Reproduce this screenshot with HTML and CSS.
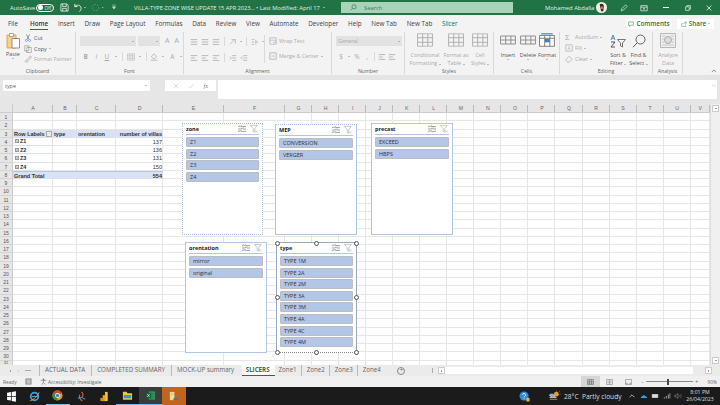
FILE: index.html
```html
<!DOCTYPE html>
<html>
	<head>
		<meta charset="UTF-8">
		<title>VILLA-TYPE-ZONE WISE UPDATE</title>
		<link rel="stylesheet" href="styles.css">
	</head>
	<body>
		<svg class="sprites" width="0" height="0">
			<symbol id="i-multi" viewBox="0 0 10 10"><path d="M0 2h2M4 2h6M0 5h4M6 5h4M0 8h2M4 8h6M2 .8l1 1 1.5-1.5M4 3.8l1 1 1.5-1.5M2 6.8l1 1 1.5-1.5" fill="none" stroke="#666" stroke-width=".8"/></symbol>
			<symbol id="i-filter" viewBox="0 0 10 10"><path d="M.5 .5h8.5L6 4.5v4.5L4 8V4.5z" fill="#fff" stroke="#aaa" stroke-width=".8"/><path d="M6.5 6.5l3 3M9.5 6.5l-3 3" stroke="#bbb" stroke-width=".7"/></symbol>
			<symbol id="i-lines" viewBox="0 0 10 10"><path d="M1 2h8M1 5h8M1 8h8" stroke="#aaa" stroke-width="1"/></symbol>
			<symbol id="i-lines2" viewBox="0 0 10 10"><path d="M1 2h8M1 5h5M1 8h8" stroke="#aaa" stroke-width="1"/></symbol>
			<symbol id="i-table" viewBox="0 0 14 12"><path d="M.5 .5h13v11H.5zM.5 4h13M.5 8h13M5 .5v11M9.5 .5v11" fill="#f3f3f3" stroke="#aaa" stroke-width=".8"/></symbol>
			<symbol id="i-cells" viewBox="0 0 14 12"><path d="M.5 2.5h13v7H.5zM.5 6h13M5 2.5v7M9.5 2.5v7" fill="#f3f3f3" stroke="#888" stroke-width=".8"/></symbol>
		</svg>

		<div class="app">
			<!-- title bar -->
			<div class="titlebar">
				<span class="autosave">AutoSave</span>
				<span class="toggle"><i></i>Off</span>
				<svg class="qa qa-save" viewBox="0 0 10 10"><path d="M1 1h6.5L9 2.5V9H1z M3 1v3h4V1M3 9V6h4v3" fill="none" stroke="#fff" stroke-width=".8"/></svg>
				<svg class="qa qa-undo" viewBox="0 0 10 10"><path d="M2 1v3h3M2 4c2-2.5 7-2 7 2 0 1.5-1 3-2 3.5" fill="none" stroke="#fff" stroke-width=".9"/></svg>
				<span class="caret-w"></span>
				<svg class="qa qa-redo" viewBox="0 0 10 10"><circle cx="5" cy="5" r="3.5" fill="none" stroke="#6fa98a" stroke-width=".9" stroke-dasharray="1.5 1.5"/></svg>
				<span class="caret-w dim"></span>
				<svg class="qa qa-more" viewBox="0 0 10 10"><path d="M2.5 2h5M3 4h4l-2 3z" fill="#cfe3d7" stroke="#cfe3d7" stroke-width=".6"/></svg>
				<span class="doc-name">VILLA-TYPE-ZONE WISE UPDATE 15 APR 2023...</span>
				<span class="doc-mod">• Last Modified: April 17</span>
				<span class="caret-w"></span>
				<div class="search">
					<svg viewBox="0 0 10 10"><circle cx="5.8" cy="4" r="3" fill="none" stroke="#2f6e4b" stroke-width=".9"/><path d="M3.6 6.2L1 9" stroke="#2f6e4b" stroke-width=".9"/></svg>
					<span>Search</span>
				</div>
				<span class="user">Mohamed Abdalla</span>
				<svg class="avatar" viewBox="0 0 12 12"><circle cx="6" cy="6" r="6" fill="#f2efe9"/><path d="M4 2.5c2-1.5 5-.5 4.5 2.5L8 10H5.5L5 7z" fill="#3b2a1e"/><path d="M5.5 5h2v2.5h-2z" fill="#c98a3c"/></svg>
				<svg class="win-ic pen" viewBox="0 0 10 10"><path d="M1.5 8.5l1-3L7 1l2 2-4.5 4.5z" fill="none" stroke="#fff" stroke-width=".8"/></svg>
				<svg class="win-ic disp" viewBox="0 0 10 10"><path d="M1 2h8v6.5H1zM1 4h8M4 6h2M5 4.8v2.4" fill="none" stroke="#fff" stroke-width=".8"/></svg>
				<span class="win-btn min"></span>
				<svg class="win-ic rest" viewBox="0 0 10 10"><path d="M2 3.5h4.5V8H2zM3.5 3.5V2H8v4.5H6.5" fill="none" stroke="#fff" stroke-width=".8"/></svg>
				<svg class="win-ic close" viewBox="0 0 10 10"><path d="M2 2l6 6M8 2l-6 6" stroke="#fff" stroke-width=".9"/></svg>
			</div>

			<!-- ribbon tabs -->
			<div class="tabs">
				<span class="tab tab-file">File</span>
				<span class="tab active">Home</span>
				<span class="tab">Insert</span>
				<span class="tab">Draw</span>
				<span class="tab">Page Layout</span>
				<span class="tab">Formulas</span>
				<span class="tab">Data</span>
				<span class="tab">Review</span>
				<span class="tab">View</span>
				<span class="tab">Automate</span>
				<span class="tab">Developer</span>
				<span class="tab">Help</span>
				<span class="tab">New Tab</span>
				<span class="tab">New Tab</span>
				<span class="tab slicer-tab">Slicer</span>
				<span class="tab-fill"></span>
				<span class="pill pill-comments"><svg viewBox="0 0 10 10"><path d="M1 1.5h8v5.5H4L2.5 9V7H1z" fill="none" stroke="#217346" stroke-width=".8"/></svg>Comments</span>
				<span class="pill pill-share"><svg viewBox="0 0 10 10"><path d="M1 4.5h2.5M1 4.5V9h7V6M4.5 5C5 3 6.5 2.5 7.5 2.5V1L9.5 3.2 7.5 5V3.8" fill="none" stroke="#217346" stroke-width=".7"/></svg>Share<i class="caret"></i></span>
			</div>

			<!-- ribbon -->
			<div class="ribbon">
				<div class="group g-clip">
					<div class="group-body">
						<div class="big paste">
							<svg class="paste-ic" viewBox="0 0 14 17"><path d="M1 3h9v13H1z" fill="#f6d28a" stroke="#d99a2b" stroke-width=".8"/><path d="M3.5 1.5h4v3h-4z" fill="#fff" stroke="#888" stroke-width=".7"/><path d="M6 6.5h7.5V16H6z" fill="#fff" stroke="#777" stroke-width=".8"/></svg>
							<span>Paste</span><i class="caret"></i>
						</div>
						<div class="stack">
							<div class="row"><svg class="ic" viewBox="0 0 10 10"><path d="M3 .5l3 6M7 .5l-3 6" stroke="#666" stroke-width=".8"/><circle cx="3" cy="8" r="1.3" fill="none" stroke="#4a7fc1" stroke-width=".7"/><circle cx="7" cy="8" r="1.3" fill="none" stroke="#4a7fc1" stroke-width=".7"/></svg><span>Cut</span></div>
							<div class="row"><svg class="ic" viewBox="0 0 10 10"><path d="M1 1h5v6.5H1zM3.5 3h5.5v6.5H3.5z" fill="#fff" stroke="#777" stroke-width=".7"/></svg><span>Copy</span><i class="caret"></i></div>
							<div class="row off"><svg class="ic" viewBox="0 0 10 10"><path d="M1 8l3-3 2 2-2 2H2zM5 4.5L8 1l1.5 1.5L6.5 6" fill="#ddd" stroke="#aaa" stroke-width=".7"/></svg><span>Format Painter</span></div>
						</div>
					</div>
					<div class="group-label">Clipboard</div>
				</div>

				<div class="group g-font">
					<div class="group-body stack-wide">
						<div class="row">
							<span class="combo font-name"><i class="caret"></i></span>
							<span class="combo font-size"><i class="caret"></i></span>
							<span class="glyph grow">A</span><span class="glyph grow">A</span>
						</div>
						<div class="row spread">
							<b class="glyph">B</b><em class="glyph">I</em><u class="glyph">U</u><i class="caret"></i><span class="sep"></span>
							<svg class="ic" viewBox="0 0 10 10"><use href="#i-table"/></svg><i class="caret"></i><span class="sep"></span>
							<svg class="ic" viewBox="0 0 10 10"><path d="M5 1l3.5 3.5L5 7.5 1.5 4.5zM1 9h8" fill="none" stroke="#aaa" stroke-width=".9"/></svg><i class="caret"></i>
							<span class="glyph under">A</span><i class="caret"></i>
						</div>
					</div>
					<div class="group-label">Font</div>
				</div>

				<div class="group g-align">
					<div class="group-body">
						<div class="stack-wide align-icons">
							<div class="row">
								<svg class="ic" viewBox="0 0 10 10"><use href="#i-lines"/></svg><svg class="ic" viewBox="0 0 10 10"><use href="#i-lines"/></svg><svg class="ic" viewBox="0 0 10 10"><use href="#i-lines"/></svg><span class="sep"></span>
								<svg class="ic" viewBox="0 0 10 10"><path d="M1 8L7 2M3 2h5v5" fill="none" stroke="#aaa" stroke-width=".9"/></svg><i class="caret"></i><span class="sep"></span>
								<svg class="ic" viewBox="0 0 10 10"><path d="M1 2h3M1 5h3M1 8h3M6 2v6M6 5h3" fill="none" stroke="#aaa" stroke-width=".9"/></svg><i class="caret"></i>
							</div>
							<div class="row">
								<svg class="ic" viewBox="0 0 10 10"><use href="#i-lines2"/></svg><svg class="ic" viewBox="0 0 10 10"><use href="#i-lines2"/></svg><svg class="ic" viewBox="0 0 10 10"><use href="#i-lines2"/></svg><span class="sep"></span>
								<svg class="ic" viewBox="0 0 10 10"><path d="M4 2h5M4 5h5M4 8h5M1 3l2 2-2 2" fill="none" stroke="#aaa" stroke-width=".9"/></svg>
								<svg class="ic" viewBox="0 0 10 10"><path d="M4 2h5M4 5h5M4 8h5M3 3L1 5l2 2" fill="none" stroke="#aaa" stroke-width=".9"/></svg>
							</div>
						</div>
						<span class="vsep"></span>
						<div class="stack-wide wrap-col">
							<div class="row off"><svg class="ic" viewBox="0 0 10 10"><path d="M1 1h8v8H1zM1 4h6a1.5 1.5 0 0 1 0 3H5" fill="none" stroke="#aaa" stroke-width=".8"/></svg><span>Wrap Text</span></div>
							<div class="row off"><svg class="ic" viewBox="0 0 10 10"><path d="M1 1h8v8H1zM3 5h4" fill="none" stroke="#aaa" stroke-width=".9"/></svg><span>Merge &amp; Center</span><i class="caret"></i></div>
						</div>
					</div>
					<div class="group-label">Alignment</div>
				</div>

				<div class="group g-num">
					<div class="group-body stack-wide">
						<div class="row"><span class="combo num-format"><span>General</span><i class="caret"></i></span></div>
						<div class="row spread num-row">
							<span class="glyph">$</span><i class="caret"></i><span class="glyph">%</span><span class="glyph">,</span><span class="sep"></span>
							<svg class="ic" viewBox="0 0 10 10"><use href="#i-lines2"/></svg><svg class="ic" viewBox="0 0 10 10"><use href="#i-lines2"/></svg>
						</div>
					</div>
					<div class="group-label">Number</div>
				</div>

				<div class="group g-styles">
					<div class="group-body tools">
						<div class="big off w40"><svg class="big-ic" viewBox="0 0 14 12"><use href="#i-table"/></svg><span>Conditional</span><span>Formatting <i class="caret"></i></span></div>
						<div class="big off w22"><svg class="big-ic" viewBox="0 0 14 12"><use href="#i-table"/></svg><span>Format as</span><span>Table <i class="caret"></i></span></div>
						<div class="big off w26"><svg class="big-ic" viewBox="0 0 14 12"><use href="#i-table"/></svg><span>Cell</span><span>Styles <i class="caret"></i></span></div>
					</div>
					<div class="group-label">Styles</div>
				</div>

				<div class="group g-cells">
					<div class="group-body tools">
						<div class="big w18"><svg class="big-ic" viewBox="0 0 14 12"><use href="#i-cells"/></svg><span>Insert</span><i class="caret"></i></div>
						<div class="big w22"><svg class="big-ic" viewBox="0 0 14 12"><use href="#i-cells"/></svg><span>Delete</span><i class="caret"></i></div>
						<div class="big w16"><svg class="big-ic" viewBox="0 0 14 12"><path d="M.5 2h13v9.5H.5zM.5 4.5h13M5 2v9.5M9.5 2v9.5" fill="#fff" stroke="#777" stroke-width=".8"/><path d="M5 5h4.5v3H5z" fill="#3f7fd0"/><path d="M2 .6h10" stroke="#3f7fd0" stroke-width="1"/></svg><span>Format</span><i class="caret"></i></div>
					</div>
					<div class="group-label">Cells</div>
				</div>

				<div class="group g-edit">
					<div class="group-body">
						<div class="stack edit-stack">
							<div class="row off"><span class="glyph sum">Σ</span><span>AutoSum</span><i class="caret"></i></div>
							<div class="row off"><svg class="ic" viewBox="0 0 10 10"><path d="M1 1h8v8H1zM5 2.5v4M3.5 5.2L5 6.8l1.5-1.6" fill="none" stroke="#aaa" stroke-width=".8"/></svg><span>Fill</span><i class="caret"></i></div>
							<div class="row off"><svg class="ic" viewBox="0 0 10 10"><path d="M1 6l4-4.5L9 5 5.5 9H3z" fill="none" stroke="#aaa" stroke-width=".8"/></svg><span>Clear</span><i class="caret"></i></div>
						</div>
						<div class="big sort">
							<svg class="big-ic" viewBox="0 0 16 14"><path d="M7.5 5.5h8L12.5 9v4l-2-1V9z" fill="#fff" stroke="#555" stroke-width=".8"/><path d="M1 6l2-5 2 5M1.8 4.2h2.4" fill="none" stroke="#3f7fd0" stroke-width=".9"/><path d="M1 8h4L1 13h4" fill="none" stroke="#444" stroke-width=".9"/></svg>
							<span>Sort &amp;</span><span>Filter <i class="caret"></i></span>
						</div>
						<div class="big find">
							<svg class="big-ic" viewBox="0 0 14 14"><circle cx="8.5" cy="5.5" r="4.5" fill="none" stroke="#555" stroke-width=".9"/><path d="M5.2 8.8L1 13.2" stroke="#555" stroke-width="1"/></svg>
							<span>Find &amp;</span><span>Select <i class="caret"></i></span>
						</div>
					</div>
					<div class="group-label">Editing</div>
				</div>

				<div class="group g-analysis">
					<div class="group-body tools">
						<div class="big off w30"><svg class="an-ic" viewBox="0 0 16 15"><path d="M.5 .5h15v14H.5z" fill="#eee" stroke="#aaa" stroke-width=".8"/><circle cx="8" cy="7" r="3.5" fill="#ddd" stroke="#999" stroke-width=".8"/><path d="M2 3h3M11 3h3M2 12h12M2 6h2M12 6h2M2 9h2M12 9h2" stroke="#bbb" stroke-width=".8"/></svg><span>Analyze</span><span>Data</span></div>
					</div>
					<div class="group-label">Analysis</div>
				</div>
				<div class="ribbon-end"><svg viewBox="0 0 8 5"><path d="M1 4l3-3 3 3" fill="none" stroke="#555" stroke-width=".8"/></svg></div>
			</div>
			<div class="ribbon-gap"></div>

			<!-- formula bar -->
			<div class="formula">
				<div class="name-box">type<i class="caret"></i></div>
				<span class="fx-dots"></span>
				<div class="fx-box">
					<svg viewBox="0 0 8 8"><path d="M1 1l6 6M7 1L1 7" stroke="#bbb" stroke-width=".7"/></svg>
					<svg viewBox="0 0 8 8"><path d="M1 4.5l2 2L7 1.5" fill="none" stroke="#bbb" stroke-width=".7"/></svg>
					<em>fx</em>
				</div>
				<div class="formula-input"><svg viewBox="0 0 8 5"><path d="M1 4l3-3 3 3" fill="none" stroke="#bbb" stroke-width=".8"/></svg></div>
			</div>

			<!-- sheet -->
			<div class="sheet-wrap">
				<div class="sheet">
					<div class="corner"><i></i></div>
					<div class="col-head">A</div><div class="col-head">B</div><div class="col-head">C</div><div class="col-head">D</div><div class="col-head">E</div><div class="col-head">F</div><div class="col-head">G</div><div class="col-head">H</div><div class="col-head">I</div><div class="col-head">J</div><div class="col-head">K</div><div class="col-head">L</div><div class="col-head">M</div><div class="col-head">N</div><div class="col-head">O</div><div class="col-head">P</div><div class="col-head">Q</div><div class="col-head">R</div><div class="col-head">S</div><div class="col-head">T</div><div class="col-head">U</div><div class="col-head">V</div>

					<div class="row-head">1</div>
					<div class="row-head">2</div>
					<div class="row-head">3</div>
					<div class="cell pv-head">Row Labels<i class="filter-btn"></i></div><div class="cell pv-head">type</div><div class="cell pv-head">orentation</div><div class="cell pv-head pv-right">number of villas</div>
					<div class="row-head">4</div>
					<div class="cell pv-key"><i class="plus"></i>Z1</div><div class="cell"></div><div class="cell"></div><div class="cell num">137</div>
					<div class="row-head">5</div>
					<div class="cell pv-key"><i class="plus"></i>Z2</div><div class="cell"></div><div class="cell"></div><div class="cell num">136</div>
					<div class="row-head">6</div>
					<div class="cell pv-key"><i class="plus"></i>Z3</div><div class="cell"></div><div class="cell"></div><div class="cell num">131</div>
					<div class="row-head">7</div>
					<div class="cell pv-key pv-last"><i class="plus"></i>Z4</div><div class="cell"></div><div class="cell"></div><div class="cell num">150</div>
					<div class="row-head">8</div>
					<div class="cell pv-total">Grand Total</div><div class="cell pv-total"></div><div class="cell pv-total"></div><div class="cell pv-total num">554</div>
					<div class="row-head">9</div><div class="row-head">10</div><div class="row-head">11</div><div class="row-head">12</div><div class="row-head">13</div><div class="row-head">14</div><div class="row-head">15</div><div class="row-head">16</div><div class="row-head">17</div><div class="row-head">18</div><div class="row-head">19</div><div class="row-head">20</div><div class="row-head">21</div><div class="row-head">22</div><div class="row-head">23</div><div class="row-head">24</div><div class="row-head">25</div><div class="row-head">26</div><div class="row-head">27</div><div class="row-head">28</div><div class="row-head">29</div><div class="row-head">30</div><div class="row-head row-cut">31</div>

					<div class="slicer s-zone dotted">
						<div class="slicer-head"><b>zone</b><svg><use href="#i-multi"/></svg><svg><use href="#i-filter"/></svg></div>
						<div class="slicer-list"><span>Z1</span><span>Z2</span><span>Z3</span><span>Z4</span></div>
					</div>
					<div class="slicer s-mep dotted-top">
						<div class="slicer-head"><b>MEP</b><svg><use href="#i-multi"/></svg><svg><use href="#i-filter"/></svg></div>
						<div class="slicer-list"><span>CONVERSION</span><span>VERGER</span></div>
					</div>
					<div class="slicer s-precast">
						<div class="slicer-head"><b>precast</b><svg><use href="#i-multi"/></svg><svg><use href="#i-filter"/></svg></div>
						<div class="slicer-list"><span>EXCEED</span><span>HBPS</span></div>
					</div>
					<div class="slicer s-orient">
						<div class="slicer-head"><b>orentation</b><svg><use href="#i-multi"/></svg><svg><use href="#i-filter"/></svg></div>
						<div class="slicer-list"><span>mirror</span><span>original</span></div>
					</div>
					<div class="slicer s-type selected">
						<div class="slicer-head"><b>type</b><svg><use href="#i-multi"/></svg><svg><use href="#i-filter"/></svg></div>
						<div class="slicer-list"><span>TYPE 1M</span><span>TYPE 2A</span><span>TYPE 2M</span><span>TYPE 3A</span><span>TYPE 3M</span><span>TYPE 4A</span><span>TYPE 4C</span><span>TYPE 4M</span></div>
						<i class="handle h-tl"></i><i class="handle h-tc"></i><i class="handle h-tr"></i><i class="handle h-ml"></i><i class="handle h-mr"></i><i class="handle h-bl"></i><i class="handle h-bc"></i><i class="handle h-br"></i>
					</div>
				</div>
				<div class="vscroll"><span class="sb-btn"><i class="tri-up"></i></span><span class="sb-btn"><i class="tri-down"></i></span></div>
			</div>

			<!-- sheet tabs -->
			<div class="sheet-tabs">
				<div class="tab-nav"><i class="tri-left green"></i><i class="tri-right dim"></i><span class="nav-dots"></span></div>
				<span class="s-tab">ACTUAL DATA</span>
				<span class="s-tab">COMPLETED SUMMARY</span>
				<span class="s-tab">MOCK-UP summary</span>
				<span class="s-tab current">SLICERS</span>
				<span class="s-tab zone">Zone1</span>
				<span class="s-tab zone">Zone2</span>
				<span class="s-tab zone">Zone3</span>
				<span class="s-tab zone">Zone4</span>
				<span class="add-sheet">+</span>
				<span class="split-dots"></span>
				<div class="hscroll"><span class="sb-btn"><i class="tri-left"></i></span><span class="hthumb"></span><span class="sb-btn"><i class="tri-right"></i></span></div>
			</div>

			<!-- status bar -->
			<div class="status">
				<span class="st-ready">Ready</span>
				<svg class="st-macro" viewBox="0 0 10 10"><path d="M1 1h8v8H1z" fill="#aaa" stroke="#777" stroke-width=".6"/><path d="M3 3h4M3 5h4M3 7h4" stroke="#eee" stroke-width=".7"/></svg>
				<svg class="st-acc" viewBox="0 0 10 10"><circle cx="5" cy="2" r="1.3" fill="#777"/><path d="M1 3.5h8M5 3.5V6M5 6L2.5 9.5M5 6l2.5 3.5" fill="none" stroke="#777" stroke-width=".9"/></svg>
				<span class="st-acc-text">Accessibility: Investigate</span>
				<span class="st-fill"></span>
				<span class="view active"><svg viewBox="0 0 10 8"><path d="M.5 .5h9v7h-9zM.5 3h9M.5 5.5h9M3.5 .5v7M6.5 .5v7" fill="none" stroke="#555" stroke-width=".7"/></svg></span>
				<span class="view"><svg viewBox="0 0 10 8"><path d="M.5 .5h9v7h-9zM5 .5v7M2 3h2M6 3h2M2 5h2M6 5h2" fill="none" stroke="#666" stroke-width=".7"/></svg></span>
				<span class="view"><svg viewBox="0 0 10 8"><path d="M.5 .5h9v7h-9zM.5 5.5h2.5v2M9.5 5.5H7v2" fill="none" stroke="#666" stroke-width=".7"/></svg></span>
				<div class="zoom-ctl"><span>−</span><div class="slider"><i></i></div><span>+</span></div>
				<span class="zoom-val">90%</span>
			</div>

			<!-- taskbar -->
			<div class="taskbar">
				<span class="tb"><svg viewBox="0 0 10 10"><path d="M1 1.5l3.5-.5v3.5H1zM5.2 .9L9 .3v4.2H5.2zM1 5.2h3.5V8.7L1 8.2zM5.2 5.2H9v4.5l-3.8-.6z" fill="#fff"/></svg></span>
				<span class="tb"><svg viewBox="0 0 12 12"><circle cx="6" cy="6" r="4.2" fill="none" stroke="#3aa1e6" stroke-width="1.8"/><path d="M2.5 6h7" stroke="#3aa1e6" stroke-width="1.3"/><path d="M1 10.5C3 11 9 6 11 1.5" fill="none" stroke="#f2b632" stroke-width=".9"/></svg></span>
				<span class="tb run"><svg viewBox="0 0 12 12"><circle cx="6" cy="6" r="5.5" fill="#d9a21b"/><path d="M6 6L1.2 3.2A5.5 5.5 0 0 1 10.8 3.2z" fill="#c9452f"/><path d="M6 6v5.5A5.5 5.5 0 0 1 1.2 3.2z" fill="#3c8d40"/><circle cx="6" cy="6" r="2.6" fill="#fff"/><circle cx="6" cy="6" r="1.9" fill="#3f83d6"/></svg></span>
				<span class="tb"><svg viewBox="0 0 12 12"><path d="M6 1c2 2 2 4 .5 6M4 4c-1 3 1 6 3 7" fill="none" stroke="#c9652f" stroke-width="1.3"/><path d="M2 8l4-1 4 2" fill="none" stroke="#4a8fd6" stroke-width="1.1"/></svg></span>
				<span class="tb"><svg viewBox="0 0 12 12"><path d="M6.5 1h3v10h-3z" fill="#f2c13a"/><path d="M4 4.5h3V11H4z" fill="#e6a328"/><path d="M1.5 7.5H5V11H1.5z" fill="#d98a1e"/></svg></span>
				<span class="tb run"><svg viewBox="0 0 12 12"><path d="M1 2h4l1 1.5h5V10.5H1z" fill="#f2c14e"/><path d="M2 5.5h8V9H2z" fill="#3f8fdc"/></svg></span>
				<span class="tb excel run"><svg viewBox="0 0 12 12"><path d="M4 1.5h7v9H4z" fill="#2d9a5d"/><path d="M7.5 1.5v9M4 4.5h7M4 7.5h7" stroke="#1c6b3e" stroke-width=".5"/><path d="M1 3h5.5v6H1z" fill="#17613a"/><path d="M2.5 4.5l2.5 3M5 4.5l-2.5 3" stroke="#fff" stroke-width=".7"/></svg></span>
				<span class="tb orange"><svg viewBox="0 0 12 12"><path d="M2 1h5v9H2z" fill="#f5dc9a"/><path d="M3 2.5h3M3 4h3" stroke="#caa860" stroke-width=".5"/><path d="M5.5 9.5c0-2 2-2.5 3-1.5 1.5-.2 2.5.5 2.5 1.5z" fill="#2a78c9"/></svg></span>
				<span class="tb-fill"></span>
				<svg class="tray-help" viewBox="0 0 12 12"><circle cx="5.5" cy="5.5" r="5" fill="#2f88d8"/><path d="M4 4.3a1.6 1.6 0 1 1 2.3 1.4c-.6.3-.8.6-.8 1.2" fill="none" stroke="#fff" stroke-width=".9"/><circle cx="5.5" cy="8.5" r=".6" fill="#fff"/><path d="M8 7.5h3.5v4H8z" fill="#e6b23a"/></svg>
				<svg class="tray-weather" viewBox="0 0 14 12"><circle cx="9" cy="4" r="2.6" fill="#e89c2c"/><path d="M9 .2v1M12.5 1l-.8.8M13.5 4h-1" stroke="#e89c2c" stroke-width=".7"/><path d="M1 6c0-2 2-3 4-2.5C7 3.5 8 5 8 6z" fill="#8fa9cf"/><path d="M1.5 8c0-1.3 2-2 3.5-1.5 1.5-.7 4-.3 4.5 1.5z" fill="#dfe7f2"/><path d="M2 9.5h8" stroke="#e89c2c" stroke-width=".9"/></svg>
				<span class="weather-text">28°C&nbsp; Partly cloudy</span>
				<svg class="tray" viewBox="0 0 10 10"><path d="M2 6.5l3-3 3 3" fill="none" stroke="#ddd" stroke-width=".9"/></svg>
				<svg class="tray" viewBox="0 0 10 10"><path d="M1 7.5c0-1.5 1-2 2-2 .3-1.5 3-2 4 0 1 0 2 .7 2 2z" fill="#3aa1e6"/></svg>
				<svg class="tray" viewBox="0 0 10 10"><path d="M1 2.5h8v5H1z" fill="#bbb"/><path d="M2 3.5h6v3H2z" fill="#ddd"/></svg>
				<svg class="tray" viewBox="0 0 10 10"><path d="M1 8h1.5V6.5H1zM3.5 8H5V5H3.5zM6 8h1.5V3H6zM8 8h1.2V1.5H8z" fill="#888"/></svg>
				<svg class="tray" viewBox="0 0 10 10"><path d="M1 4h1.5L5 2v6L2.5 6H1z" fill="none" stroke="#999" stroke-width=".7"/><path d="M6.5 3.5c1 1 1 2 0 3M8 2.5c1.5 1.5 1.5 3.5 0 5" fill="none" stroke="#888" stroke-width=".6"/></svg>
				<div class="clock"><span>8:01 PM</span><span>26/04/2023</span></div>
			</div>
		</div>
	</body>
</html>
```

FILE: styles.css
```css
*{
	margin: 0;
	padding: 0;
	box-sizing: border-box;
}
html,body{
	width: 720px;
	height: 405px;
	overflow: hidden;
	background: #e6e6e6;
}
body{
	font-family: "Open Sans", "Noto Sans", sans-serif;
	font-size: 5.8px;
	color: #555;
}
i{
	font-style: normal;
}
.sprites{
	position: absolute;
}
.app{
	width: 720px;
	height: 405px;
	display: flex;
	flex-direction: column;
}
.caret{
	display: inline-block;
	width: 0;
	height: 0;
	flex: none;
	border-left: 1.5px solid transparent;
	border-right: 1.5px solid transparent;
	border-top: 1.5px solid #888;
}

/* title bar */
.titlebar{
	height: 15px;
	flex: none;
	background: #217346;
	color: #e4f0e9;
	display: flex;
	align-items: center;
	padding-left: 10px;
}
.autosave{
	width: 26px;
}
.toggle{
	width: 18px;
	height: 8px;
	border: 1px solid #fff;
	border-radius: 4px;
	display: flex;
	align-items: center;
	justify-content: flex-end;
	padding: 0 2px;
	font-size: 4.5px;
	position: relative;
}
.toggle i{
	position: absolute;
	left: 1px;
	width: 4.5px;
	height: 4.5px;
	border-radius: 50%;
	background: #fff;
}
.qa{
	width: 9px;
	height: 9px;
	flex: none;
}
.qa-save{
	margin-left: 6px;
}
.qa-undo{
	margin-left: 4px;
}
.qa-redo{
	margin-left: 5px;
}
.qa-more{
	margin-left: 6px;
	width: 8px;
}
.caret-w{
	width: 0;
	height: 0;
	flex: none;
	margin-left: 2px;
	border-left: 1.5px solid transparent;
	border-right: 1.5px solid transparent;
	border-top: 1.5px solid #e4f0e9;
}
.caret-w.dim{
	border-top-color: #6fa98a;
}
.doc-name{
	margin-left: 16px;
	width: 122px;
	font-size: 5.6px;
	white-space: nowrap;
}
.doc-mod{
	width: 65px;
	white-space: nowrap;
}
.search{
	margin-left: 16px;
	width: 172px;
	height: 11px;
	flex: none;
	background: #a8d3b8;
	color: #3c7a58;
	display: flex;
	align-items: center;
	padding-left: 9px;
	gap: 7px;
}
.search svg{
	width: 7px;
	height: 7px;
}
.user{
	margin-left: 32px;
	width: 48px;
	white-space: nowrap;
}
.avatar{
	width: 11px;
	height: 11px;
	flex: none;
	margin-left: 3px;
}
.win-ic{
	width: 8px;
	height: 8px;
	flex: none;
}
.pen{
	margin-left: 13px;
}
.disp{
	margin-left: 12px;
}
.win-btn.min{
	margin-left: 15px;
	width: 6px;
	height: 1px;
	background: #fff;
}
.rest{
	margin-left: 15px;
}
.close{
	margin-left: 13px;
}

/* ribbon tabs */
.tabs{
	height: 17px;
	flex: none;
	background: #f3f3f3;
	display: flex;
	align-items: center;
	padding-left: 8px;
	font-size: 6.3px;
	color: #444;
}
.tab{
	position: relative;
	margin-right: 9.7px;
	white-space: nowrap;
}
.tab-file{
	margin-right: 12px;
}
.tab.active{
	font-weight: 600;
	color: #333;
}
.tab.active::after{
	content: "";
	position: absolute;
	left: 0;
	right: 0;
	bottom: -2px;
	height: 1px;
	background: #217346;
}
.slicer-tab{
	color: #217346;
}
.tab-fill{
	flex: 1;
}
.pill{
	height: 10px;
	background: #fff;
	display: flex;
	align-items: center;
	justify-content: center;
	gap: 2px;
	color: #217346;
	font-weight: 600;
}
.pill svg{
	width: 6px;
	height: 6px;
}
.pill-comments{
	width: 46px;
	margin-right: 5px;
}
.pill-share{
	width: 37px;
	margin-right: 6px;
}

/* ribbon */
.ribbon{
	height: 43px;
	flex: none;
	background: #f3f3f3;
	display: flex;
	font-size: 5.4px;
	color: #555;
}
.group{
	display: flex;
	flex-direction: column;
	flex: none;
	border-right: 1px solid #d9d9d9;
	margin-bottom: 1px;
}
.group-body{
	flex: 1;
	display: flex;
	min-height: 0;
}
.group-label{
	height: 6px;
	line-height: 6px;
	text-align: center;
	font-size: 5.2px;
	color: #666;
}
.g-clip{
	width: 76px;
}
.g-font{
	width: 108px;
}
.g-align{
	width: 148px;
}
.g-num{
	width: 73px;
}
.g-styles{
	width: 89px;
}
.g-cells{
	width: 66px;
}
.g-edit{
	width: 93px;
}
.g-analysis{
	width: 30px;
}
.ribbon-end{
	flex: 1;
	display: flex;
	align-items: flex-end;
	justify-content: flex-end;
	padding: 0 3px 2px 0;
}
.ribbon-end svg{
	width: 6px;
	height: 4px;
}
.row{
	display: flex;
	align-items: center;
	gap: 2px;
	white-space: nowrap;
}
.off{
	color: #aaa;
}
.ic{
	width: 8px;
	height: 8px;
	flex: none;
}
.stack{
	display: flex;
	flex-direction: column;
	gap: 2.5px;
	padding-top: 2px;
}
.big{
	display: flex;
	flex-direction: column;
	align-items: center;
	flex: none;
	line-height: 8px;
	white-space: nowrap;
}
.big-ic{
	width: 16px;
	height: 14px;
	margin: 1px 0 4px;
}
.w16{
	width: 16px;
}
.w18{
	width: 18px;
}
.w22{
	width: 22px;
}
.w26{
	width: 26px;
}
.w30{
	width: 30px;
}
.w40{
	width: 40px;
}
.paste{
	width: 20px;
	margin: 0 1px 0 3px;
}
.paste-ic{
	width: 14px;
	height: 17px;
	margin: 0 0 1px;
}
.stack-wide{
	display: flex;
	flex-direction: column;
	gap: 6px;
	padding: 4px 0 0 4px;
}
.combo{
	height: 10px;
	background: #e2e2e2;
	display: flex;
	align-items: center;
	justify-content: flex-end;
	padding-right: 2px;
}
.font-name{
	width: 56px;
}
.font-size{
	width: 22px;
}
.glyph{
	font-size: 6.5px;
	color: #aaa;
	line-height: 8px;
}
.grow{
	margin-left: 3px;
	font-size: 7px;
}
.spread{
	gap: 3px;
	padding-left: 2px;
}
.spread .glyph{
	width: 8px;
	text-align: center;
}
.spread .caret{
	margin: 0 1px;
}
.sep{
	width: 1px;
	height: 9px;
	background: #d9d9d9;
	margin: 0 1px;
}
.vsep{
	width: 1px;
	height: 28px;
	flex: none;
	margin-top: 3px;
	background: #d9d9d9;
}
.align-icons{
	width: 80px;
	flex: none;
	padding-top: 5px;
	gap: 7px;
}
.align-icons .row{
	gap: 3px;
	padding-left: 2px;
}
.wrap-col{
	gap: 7px;
	padding-top: 5px;
}
.num-format{
	width: 66px;
	justify-content: space-between;
	padding-left: 2px;
	color: #aaa;
}
.num-row{
	padding-left: 1px;
	gap: 2px;
}
.tools{
	justify-content: flex-start;
}
.g-cells .tools{
	padding-left: 5px;
}
.edit-stack{
	width: 48px;
	padding-left: 5px;
	padding-top: 1px;
	gap: 3px;
}
.sum{
	font-size: 8px;
	width: 8px;
}
.sort{
	width: 20px;
}
.find{
	width: 21px;
}
.sort .big-ic,.find .big-ic{
	margin: 2px 0 3px;
}
.an-ic{
	width: 16px;
	height: 15px;
	margin: 1px 0 3px;
}
.ribbon-gap{
	height: 5px;
	flex: none;
	background: #e4e4e4;
}

/* formula bar */
.formula{
	height: 24px;
	flex: none;
	display: flex;
	align-items: flex-start;
	padding-left: 3px;
	background: #e6e6e6;
}
.name-box{
	width: 147px;
	height: 11px;
	background: #fff;
	display: flex;
	align-items: center;
	justify-content: space-between;
	padding: 0 3px 0 2px;
	font-size: 5.4px;
	color: #666;
}
.fx-dots{
	width: 15px;
}
.fx-box{
	width: 51px;
	height: 11px;
	background: #fff;
	display: flex;
	align-items: center;
	justify-content: space-around;
	padding: 0 3px;
	font-family: "Liberation Serif", serif;
	font-size: 6.5px;
	color: #777;
}
.fx-box svg{
	width: 6px;
	height: 6px;
}
.formula-input{
	width: 499px;
	height: 19px;
	margin-left: 2px;
	background: #fff;
	display: flex;
	justify-content: flex-end;
	padding: 4px 1px 0 0;
}
.formula-input svg{
	width: 5px;
	height: 3px;
}

/* sheet */
.sheet-wrap{
	height: 261px;
	flex: none;
	display: flex;
	background: #fff;
}
.sheet{
	position: relative;
	width: 710px;
	height: 261px;
	overflow: hidden;
	display: grid;
	grid-template-columns: 13px 40px 24px 39px 47px 61px 61px repeat(15, 27.06px) 19px;
	grid-template-rows: 9px repeat(30, 8.26px) 4.2px;
	font-family: "Liberation Sans", sans-serif;
	font-size: 5.5px;
	color: #333;
}
.corner{
	background: #e6e6e6;
	border-right: 1px solid #ccc;
	border-bottom: 1px solid #ccc;
}
.col-head{
	position: relative;
	background: #e6e6e6;
	border-bottom: 1px solid #ccc;
	text-align: center;
	line-height: 8px;
	font-size: 5.2px;
	color: #666;
}
.col-head::before{
	content: "";
	position: absolute;
	right: 0;
	top: 1px;
	height: 7px;
	width: 1px;
	background: #bbb;
}
.col-head::after{
	content: "";
	position: absolute;
	right: 0;
	top: 9px;
	width: 1px;
	height: 252px;
	background: #e6e6e6;
}
.row-head{
	grid-column: 1;
	background: #e6e6e6;
	border-right: 1px solid #ccc;
	border-bottom: 1px solid #d4d4d4;
	text-align: center;
	line-height: 8px;
	font-size: 5px;
	color: #555;
	position: relative;
}
.row-head::after{
	content: "";
	position: absolute;
	left: 13px;
	bottom: -1px;
	width: 697px;
	height: 1px;
	background: #e6e6e6;
}
.row-cut{
	border-bottom: 0;
	font-size: 4.2px;
	line-height: 4.2px;
}
.row-cut::after{
	display: none;
}
.cell{
	position: relative;
	z-index: 1;
	line-height: 8px;
	padding: 0 1px;
	white-space: nowrap;
}
.pv-head{
	background: #d9e1f2;
	font-weight: bold;
	display: flex;
	align-items: center;
	justify-content: space-between;
}
.pv-right{
	justify-content: flex-end;
}
.filter-btn{
	width: 6px;
	height: 6px;
	background: #e8e8e8;
	border: 1px solid #aaa;
	flex: none;
}
.pv-key{
	font-weight: bold;
	display: flex;
	align-items: center;
	gap: 1px;
	padding-left: 2px;
	border-bottom: 1px solid #d9e1f2;
}
.pv-last{
	border-bottom: 0;
}
.plus{
	width: 4px;
	height: 4px;
	background: #d0d0d0;
	border: 1px solid #999;
}
.num{
	text-align: right;
}
.pv-total{
	background: #d9e1f2;
	font-weight: bold;
	border-top: 1px solid #b4c6e7;
}

/* slicers sit on top of the cells */
.slicer{
	position: absolute;
	z-index: 2;
	background: #fff;
	border: 1px solid #b4c6e7;
	display: flex;
	flex-direction: column;
	font-family: "Open Sans", sans-serif;
	font-size: 5.5px;
}
.dotted{
	border-style: dotted;
	border-color: #a9bfe3;
}
.dotted-top{
	border-top: 1px dotted #a9bfe3;
}
.s-zone{
	left: 182px;
	top: 19px;
	width: 81px;
	height: 112px;
}
.s-mep{
	left: 275px;
	top: 20px;
	width: 82px;
	height: 111px;
}
.s-precast{
	left: 371px;
	top: 19px;
	width: 82px;
	height: 112px;
}
.s-orient{
	left: 185px;
	top: 138px;
	width: 82px;
	height: 111px;
}
.s-type{
	left: 276px;
	top: 138px;
	width: 81px;
	height: 111px;
	overflow: visible;
}
.slicer-head{
	flex: none;
	height: 11px;
	margin: 0 3px;
	padding-right: 1px;
	border-bottom: 1px solid #b4c6e7;
	display: flex;
	align-items: center;
	gap: 4.5px;
	color: #222;
}
.slicer-head b{
	flex: 1;
}
.slicer-head svg{
	width: 8px;
	height: 8px;
	flex: none;
}
.slicer-list{
	display: flex;
	flex-direction: column;
	gap: 1.6px;
	padding: 2px 3px;
}
.slicer-list span{
	height: 10px;
	line-height: 9px;
	padding-left: 3px;
	background: #b4c6e7;
	border: 1px solid #bdbdbd;
	border-radius: 1px;
	color: #333;
}
.selected{
	border-color: #9aa9c4;
	border-bottom: 1px dotted #888;
}
.handle{
	position: absolute;
	width: 5px;
	height: 5px;
	margin: -2.5px 0 0 -2.5px;
	background: #fff;
	border: 1px solid #555;
	border-radius: 50%;
}
.h-tl,.h-tc,.h-tr{
	top: 0;
}
.h-ml,.h-mr{
	top: 50%;
}
.h-bl,.h-bc,.h-br{
	top: 100%;
}
.h-tl,.h-ml,.h-bl{
	left: 0;
}
.h-tc,.h-bc{
	left: 50%;
}
.h-tr,.h-mr,.h-br{
	left: 100%;
}

/* vertical scroll */
.vscroll{
	width: 10px;
	flex: none;
	background: #f0f0f0;
	display: flex;
	flex-direction: column;
	justify-content: space-between;
	align-items: center;
	padding: 1px 0;
	border-left: 1px solid #ddd;
}
.sb-btn{
	width: 7px;
	height: 7px;
	flex: none;
	background: #fff;
	border: 1px solid #ccc;
	display: flex;
	align-items: center;
	justify-content: center;
}
.tri-up,.tri-down,.tri-left,.tri-right{
	display: block;
	width: 0;
	height: 0;
	border: 1.5px solid transparent;
}
.tri-up{
	border-bottom-color: #444;
	margin-bottom: 1px;
}
.tri-down{
	border-top-color: #444;
	margin-top: 1px;
}
.tri-left{
	border-right-color: #444;
	margin-right: 1px;
}
.tri-right{
	border-left-color: #444;
	margin-left: 1px;
}
.green{
	border-right-color: #217346;
}
.dim{
	border-left-color: #bbb;
}

/* sheet tabs */
.sheet-tabs{
	height: 11px;
	flex: none;
	background: #ebebeb;
	display: flex;
	align-items: center;
	font-size: 6.2px;
	color: #666;
}
.tab-nav{
	width: 38.5px;
	flex: none;
	display: flex;
	align-items: center;
	gap: 5px;
	padding-left: 9px;
}
.nav-dots{
	width: 6px;
	height: 1px;
	background: #aaa;
}
.s-tab{
	height: 11px;
	line-height: 10px;
	padding: 0 5.5px;
	border-left: 1px solid #bbb;
	white-space: nowrap;
	flex: none;
}
.s-tab.zone{
	padding: 0 4.5px;
}
.s-tab.current{
	background: #fff;
	border-left: 0;
	margin-left: 2px;
	padding: 0 5px 0 4px;
	border-bottom: 1px solid #217346;
	color: #217346;
	font-weight: 700;
}
.s-tab.current + .s-tab{
	border-left: 0;
	padding-left: 4px;
}
.add-sheet{
	width: 8px;
	height: 8px;
	flex: none;
	margin-left: 12px;
	border: 1px solid #888;
	border-radius: 50%;
	text-align: center;
	line-height: 5px;
	font-size: 6px;
}
.split-dots{
	width: 1px;
	height: 5px;
	flex: none;
	margin-left: 27px;
	background: #aaa;
}
.hscroll{
	margin-left: 5px;
	flex: 1;
	display: flex;
	align-items: center;
}
.hthumb{
	width: 248px;
	height: 7px;
	background: #fff;
	margin-right: 12px;
}

/* status bar */
.status{
	height: 11px;
	flex: none;
	background: #f0f0f0;
	display: flex;
	align-items: center;
	padding-left: 3px;
	font-size: 4.8px;
	color: #666;
}
.st-ready{
	width: 22px;
}
.st-macro{
	width: 7px;
	height: 7px;
}
.st-acc{
	width: 7px;
	height: 7px;
	margin-left: 8px;
}
.st-acc-text{
	margin-left: 1px;
	white-space: nowrap;
}
.st-fill{
	flex: 1;
}
.view{
	width: 19px;
	height: 11px;
	flex: none;
	display: flex;
	align-items: center;
	justify-content: center;
}
.view.active{
	background: #d6d6d6;
}
.view svg{
	width: 7px;
	height: 6px;
}
.zoom-ctl{
	display: flex;
	align-items: center;
	gap: 2px;
	margin-left: 3px;
	font-size: 5px;
}
.slider{
	position: relative;
	width: 47px;
	height: 1px;
	background: #888;
}
.slider i{
	position: absolute;
	left: 21px;
	top: -2.5px;
	width: 2px;
	height: 6px;
	background: #444;
}
.zoom-val{
	width: 19px;
	margin-left: 3px;
	padding-right: 3px;
	text-align: right;
}

/* taskbar */
.taskbar{
	flex: 1;
	background: #1b1b1b;
	display: flex;
	align-items: center;
	color: #ddd;
}
.tb{
	width: 23.2px;
	height: 18px;
	flex: none;
	display: flex;
	align-items: center;
	justify-content: center;
}
.tb svg{
	width: 11px;
	height: 11px;
}
.tb.run{
	border-bottom: 1px solid #7ab8e8;
}
.excel{
	background: #3c3c3c;
}
.orange{
	background: #bf651d;
}
.tb-fill{
	flex: 1;
}
.tray-help{
	width: 11px;
	height: 11px;
	flex: none;
}
.tray-weather{
	width: 13px;
	height: 12px;
	flex: none;
	margin-left: 18px;
}
.weather-text{
	font-size: 6.6px;
	margin: 0 3px 0 3.5px;
	white-space: nowrap;
}
.tray{
	width: 8px;
	height: 8px;
	flex: none;
	margin-left: 3.5px;
}
.clock{
	width: 34px;
	flex: none;
	margin-left: 1px;
	margin-right: 3px;
	display: flex;
	flex-direction: column;
	align-items: center;
	font-size: 5.2px;
	line-height: 7.5px;
}
```
